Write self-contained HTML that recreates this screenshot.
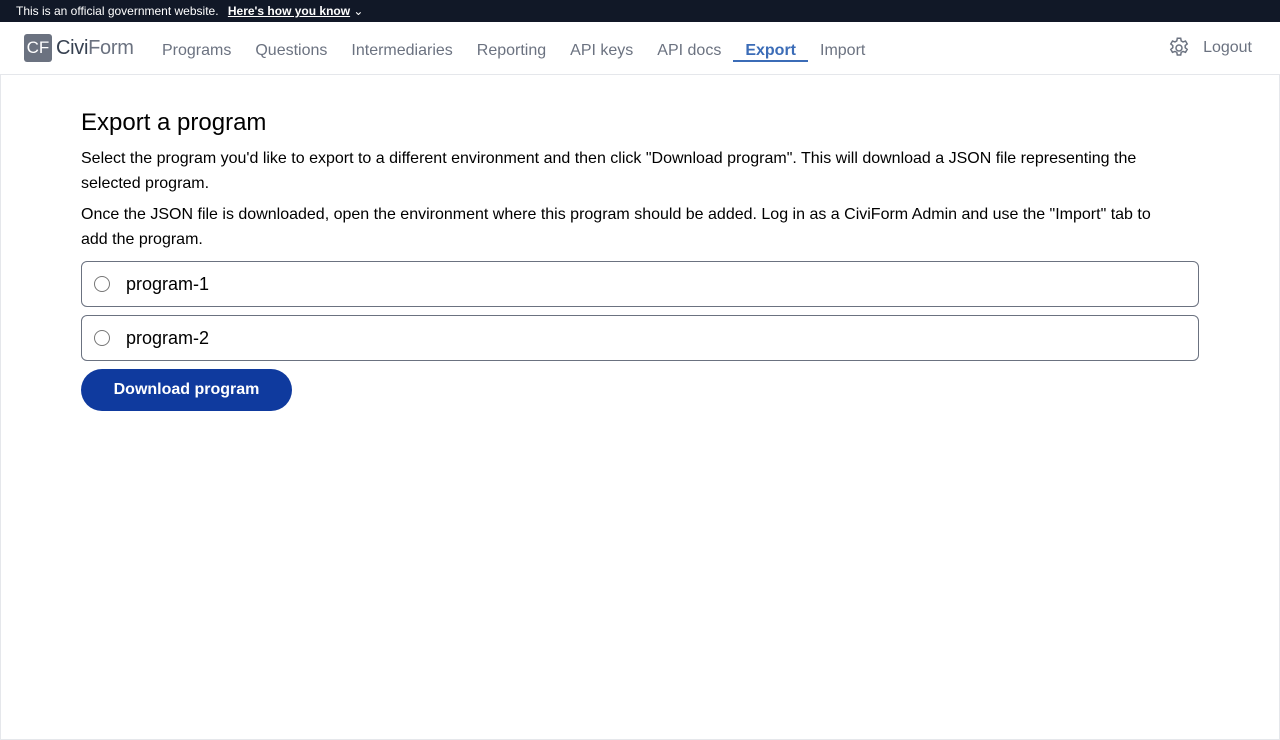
<!DOCTYPE html>
<html><head><meta charset="utf-8"><style>
*{box-sizing:border-box;margin:0;padding:0}
body{width:1280px;height:740px;font-family:"Liberation Sans",sans-serif;background:#fff;color:#000;position:relative;overflow:hidden}
.gov{height:22px;background:#111827;color:#fff;font-size:12px;line-height:22px;padding-left:16px}
.gov b{text-decoration:underline;margin-left:6px}
.nav{height:53px;border-bottom:1px solid #e5e7eb;position:relative}
.logo{position:absolute;left:24px;top:12px;display:flex;align-items:center}
.logo .b{width:28px;height:28px;background:#6b7280;border-radius:3px;color:#fff;font-size:17px;line-height:28px;text-align:center}
.logo .t{font-size:20px;color:#374151;margin-left:4px;letter-spacing:-0.3px}
.logo .t span{color:#6b7280;font-weight:300}
.links{position:absolute;left:150px;top:19px;font-size:16px;color:#6b7280;display:flex}
.links a{padding:0 12px;line-height:20px}
.links a.act{color:#3b6cb7;font-weight:bold;border-bottom:2px solid #3b6cb7;height:21px}
.lo{position:absolute;right:28px;top:14px;font-size:16px;color:#6b7280;display:flex;align-items:center}
.main{position:absolute;left:0;top:75px;width:1280px;height:665px;border:1px solid #e5e7eb;border-top:none}
.c{position:absolute;left:80px;top:34px;width:1118px}
h1{font-size:24px;font-weight:normal;line-height:28px}
p{font-size:16px;line-height:25px;margin-top:9px;width:1100px}
.opt{height:46px;border:1px solid #6b7280;border-radius:6px;margin-top:9px;display:flex;align-items:center;font-size:18px;padding-left:12px}
.opt .r{width:16px;height:16px;border:1px solid #777;border-radius:50%;margin-right:16px}
.btn{margin-top:8px;width:211px;height:42px;border-radius:21px;background:#0f3a9e;color:#fff;font-weight:bold;font-size:16px;line-height:42px;text-align:center}
</style></head><body>
<div class="gov">This is an official government website. <b>Here's how you know</b> ⌄</div>
<div class="nav">
<div class="logo"><div class="b">CF</div><div class="t">Civi<span>Form</span></div></div>
<div class="links"><a>Programs</a><a>Questions</a><a>Intermediaries</a><a>Reporting</a><a>API keys</a><a>API docs</a><a class="act">Export</a><a>Import</a></div>
<div class="lo"><svg width="24" height="24" viewBox="0 0 24 24" fill="none" stroke="#6b7280" stroke-width="1.5"><path d="M10.3 2.3h3.4l.5 2.6 1.8 1 2.5-.9 1.7 2.9-2 1.7v2.1l2 1.7-1.7 2.9-2.5-.9-1.8 1-.5 2.6h-3.4l-.5-2.6-1.8-1-2.5.9-1.7-2.9 2-1.7v-2.1l-2-1.7 1.7-2.9 2.5.9 1.8-1z"/><circle cx="12" cy="12" r="3"/></svg><span style="margin-left:12px">Logout</span></div>
</div>
<div class="main"><div class="c">
<h1>Export a program</h1>
<p>Select the program you'd like to export to a different environment and then click "Download program". This will download a JSON file representing the selected program.</p>
<p style="margin-top:6px">Once the JSON file is downloaded, open the environment where this program should be added. Log in as a CiviForm Admin and use the "Import" tab to<br>add the program.</p>
<div class="opt"><div class="r"></div>program-1</div>
<div class="opt" style="margin-top:8px"><div class="r"></div>program-2</div>
<div class="btn">Download program</div>
</div></div>
</body></html>
